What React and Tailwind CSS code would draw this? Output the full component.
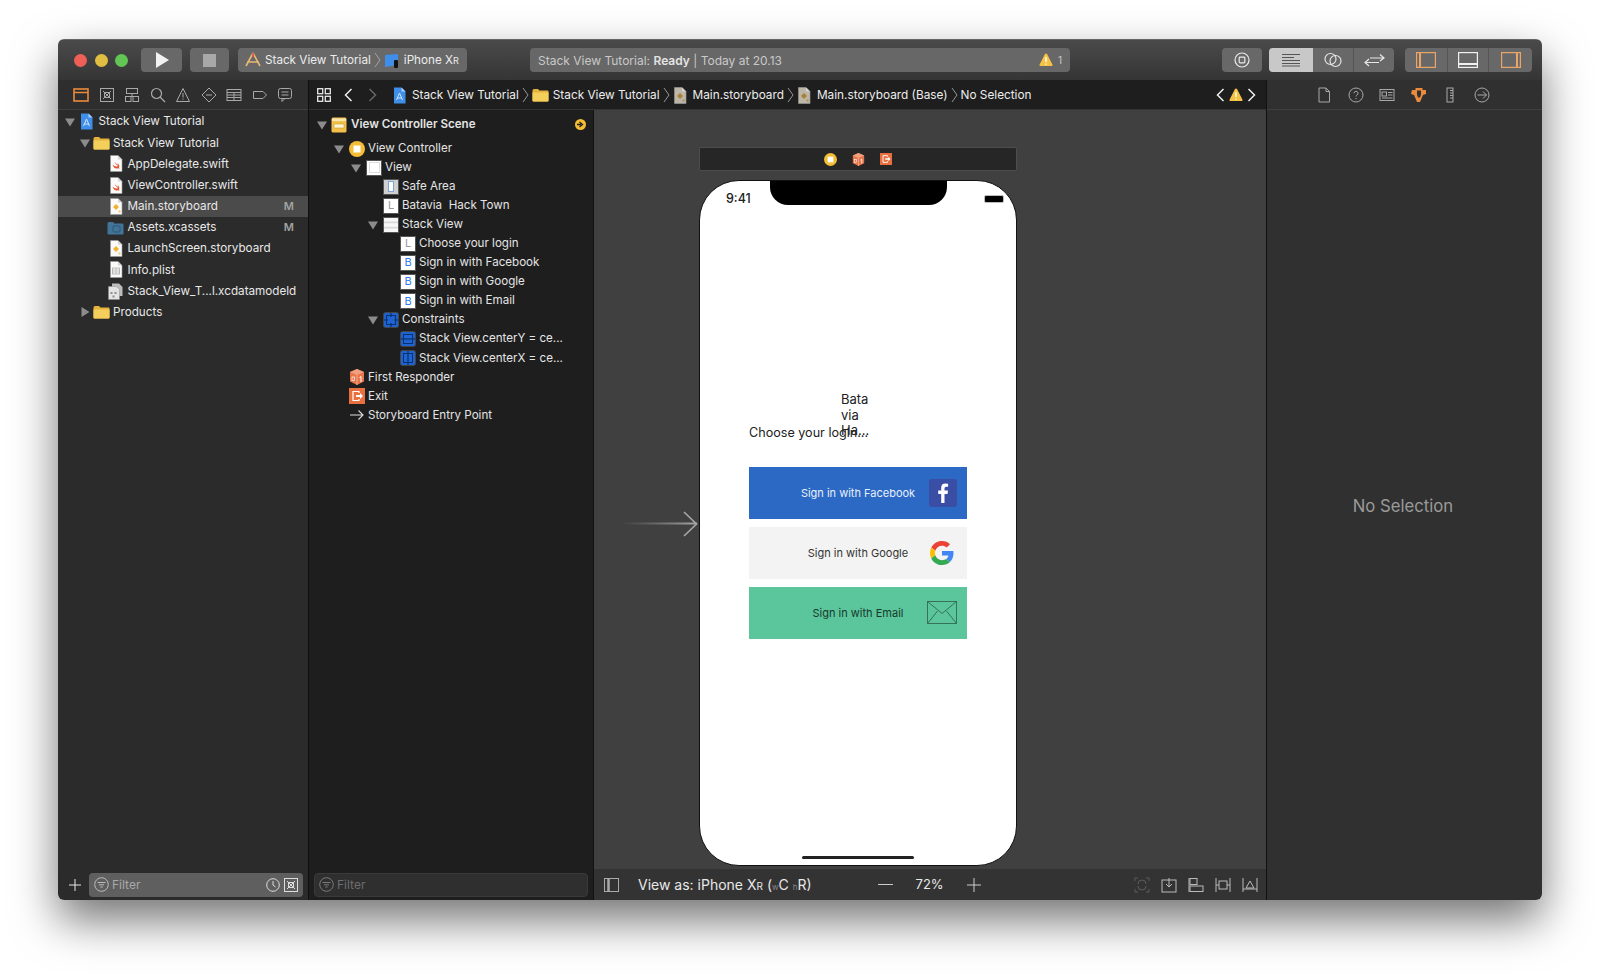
import React from 'react'

const Tri = ({ open }) => (
  <svg width="12" height="12" viewBox="0 0 12 12" className="shrink-0">
    {open ? <path d="M1 2.500h10L6 10.500z" fill="#8c8c8c" /> : <path d="M2.500 1v10l8-5z" fill="#8c8c8c" />}
  </svg>
)

const Doc = ({ children, fill = '#fafafa', w = 14, h = 17 }) => (
  <svg width={w} height={h} viewBox="0 0 14 17">
    <path d="M1.500.5h7.500l4 4v12h-11.500z" fill={fill} stroke="#9a9a9a" strokeWidth=".6" />
    <path d="M9 .5v4h4z" fill="#d5d5d5" />
    {children}
  </svg>
)

const Folder = ({ c1 = '#f5cf5c', c2 = '#e5b23c', w = 17, h = 14 }) => (
  <svg width={w} height={h} viewBox="0 0 17 14">
    <path d="M.5 2.500q0-1.500 1.500-1.500h4l1.500 1.500h8q1 0 1 1v9q0 1-1 1h-14q-1 0-1-1z" fill={c2} />
    <path d="M.5 4.500h16v8q0 1-1 1h-14q-1 0-1-1z" fill={c1} />
  </svg>
)

const ProjectIcon = () => (
  <svg width="15" height="17" viewBox="0 0 14 17">
    <path d="M1.500.5h7.500l4 4v12h-11.500z" fill="#3f8eea" />
    <path d="M9 .5v4h4z" fill="#a8d0fa" />
    <path d="M4 13l3-7 3 7M4.500 11h5" stroke="#cfe4fc" strokeWidth="1" fill="none" />
  </svg>
)

const SwiftIcon = () => (
  <Doc>
    <path d="M3.500 9.500q3 3 5.500 1.500-3-2.500-3.500-4 2.500 2.500 4 3-1-2-1-2 2.500 2 1.500 5 .5 .5 .5 1-1-1-2.500-.5-3 .5-4.500-4z" fill="#e5532f" />
  </Doc>
)

const BoardIcon = ({ c = '#eeb42f', fill = '#fafafa' }) => (
  <Doc fill={fill}>
    <path d="M7 6l3 3-3 3-3-3z" fill={c} />
    <path d="M9.500 12.500h2v2h-2z" fill={c} opacity=".7" />
  </Doc>
)

const PlistIcon = () => (
  <Doc>
    <rect x="3.500" y="7" width="7" height="6" fill="none" stroke="#aaa" strokeWidth=".8" />
    <path d="M3.500 9h7M3.500 11h7M7 7v6" stroke="#aaa" strokeWidth=".6" />
  </Doc>
)

const ModelIcon = () => (
  <svg width="17" height="17" viewBox="0 0 17 17">
    <path d="M5 .5h7l3.500 3.500v9h-10.500z" fill="#bdbdbd" />
    <path d="M1.500 3.500h8l3 3v10h-11z" fill="#e4e4e4" stroke="#8e8e8e" strokeWidth=".5" />
    <path d="M3.500 9h2v2h-2zM7.500 9h2v2h-2zM5.500 12.500h2v2h-2z" fill="#8e8e8e" />
  </svg>
)

const AssetsIcon = () => (
  <svg width="17" height="14" viewBox="0 0 17 14">
    <path d="M.5 2.500q0-1.500 1.500-1.500h4l1.500 1.500h8q1 0 1 1v9q0 1-1 1h-14q-1 0-1-1z" fill="#42749a" />
    <rect x="6" y="5" width="7" height="6" rx="1" fill="none" stroke="#2f5572" strokeWidth="1" />
  </svg>
)

const navRows = [
  { level: 0, open: true, icon: <ProjectIcon />, text: 'Stack View Tutorial' },
  { level: 1, open: true, icon: <Folder />, text: 'Stack View Tutorial' },
  { level: 2, icon: <SwiftIcon />, text: 'AppDelegate.swift' },
  { level: 2, icon: <SwiftIcon />, text: 'ViewController.swift' },
  { level: 2, icon: <BoardIcon />, text: 'Main.storyboard', mark: 'M', selected: true },
  { level: 2, icon: <AssetsIcon />, text: 'Assets.xcassets', mark: 'M' },
  { level: 2, icon: <BoardIcon />, text: 'LaunchScreen.storyboard' },
  { level: 2, icon: <PlistIcon />, text: 'Info.plist' },
  { level: 2, icon: <ModelIcon />, text: 'Stack_View_T...l.xcdatamodeld' },
  { level: 1, open: false, icon: <Folder />, text: 'Products' },
]

const Tile = ({ children, className = 'bg-white' }) => (
  <span className={`w-[16px] h-[16px] flex items-center justify-center text-[11px] leading-none border border-[#555] ${className}`}>
    {children}
  </span>
)

const SceneIcon = () => (
  <svg width="16" height="16" viewBox="0 0 16 16">
    <rect x=".5" y=".5" width="15" height="15" rx="1.500" fill="#f2c14a" />
    <path d="M1 1.500h14v2.500h-14z" fill="#f7e6b0" />
    <rect x="3" y="7" width="10" height="4" fill="#fdf3d0" stroke="#b88f2a" strokeWidth=".5" />
  </svg>
)

const VcIcon = ({ size = 16 }) => (
  <svg width={size} height={size} viewBox="0 0 16 16">
    <circle cx="8" cy="8" r="8" fill="#f3bd35" />
    <rect x="4.500" y="4.500" width="7" height="7" fill="#fff" />
  </svg>
)

const CubeIcon = ({ size = 16 }) => (
  <svg width={size} height={size} viewBox="0 0 16 16">
    <path d="M8 0l7 3v9.500l-7 3.500-7-3.500v-9.500z" fill="#e8744a" />
    <path d="M8 0l7 3-7 3-7-3z" fill="#f0a07f" />
    <path d="M8 6v10" stroke="#f6c7b0" strokeWidth=".7" />
    <path d="M10.500 8.500l1.500-1v5.500" stroke="#fff" strokeWidth="1" fill="none" />
    <rect x="3" y="8" width="2.500" height="3.500" fill="none" stroke="#fff" strokeWidth=".7" />
  </svg>
)

const ExitIcon = ({ size = 16 }) => (
  <svg width={size} height={size} viewBox="0 0 16 16">
    <rect width="16" height="16" fill="#e96f3f" />
    <path d="M10 5v-1.500h-6v9h6v-1.500" stroke="#fff" strokeWidth="1.200" fill="none" />
    <path d="M7 7h4v-2l3 3-3 3v-2h-4z" fill="#fff" />
  </svg>
)

const Constraint = ({ v }) => (
  <svg width="16" height="16" viewBox="0 0 16 16">
    <rect x=".5" y=".5" width="15" height="15" rx="2" fill="#1d64d0" stroke="#444" />
    <rect x="3.500" y="3.500" width="9" height="9" fill="none" stroke="#0b2f6e" />
    {v === 'y' && <path d="M1 8h14" stroke="#0b2f6e" strokeWidth="1.200" />}
    {v === 'x' && <path d="M8 1v14" stroke="#0b2f6e" strokeWidth="1.200" />}
    {v === 'c' && <path d="M8 1v4M8 11v4M1 8h4M11 8h4" stroke="#0b2f6e" strokeWidth="1.200" />}
  </svg>
)

const StackTile = () => (
  <Tile className="bg-[#d9d9d9]">
    <svg width="14" height="14" viewBox="0 0 14 14">
      <path d="M0 0h14v3.500h-14zM0 5.200h14v3.500h-14zM0 10.400h14v3.600h-14z" fill="#f7f7f7" />
    </svg>
  </Tile>
)

const SafeTile = () => (
  <Tile className="bg-[#d0d0d0]">
    <span className="w-[6px] h-[11px] bg-white border border-[#7da3dd]" />
  </Tile>
)

const LabelTile = () => <Tile><span className="text-[#9a9a9a]">L</span></Tile>
const BtnTile = () => <Tile><span className="text-[#2f7bf0]">B</span></Tile>

const outlineRows = [
  { level: 0, open: true, icon: <VcIcon />, text: 'View Controller' },
  { level: 1, open: true, icon: <Tile><span className="w-[11px] h-[11px] bg-white border border-[#ddd]" /></Tile>, text: 'View' },
  { level: 2, icon: <SafeTile />, text: 'Safe Area' },
  { level: 2, icon: <LabelTile />, text: 'Batavia\u00a0 Hack Town' },
  { level: 2, open: true, icon: <StackTile />, text: 'Stack View' },
  { level: 3, icon: <LabelTile />, text: 'Choose your login' },
  { level: 3, icon: <BtnTile />, text: 'Sign in with Facebook' },
  { level: 3, icon: <BtnTile />, text: 'Sign in with Google' },
  { level: 3, icon: <BtnTile />, text: 'Sign in with Email' },
  { level: 2, open: true, icon: <Constraint v="c" />, text: 'Constraints' },
  { level: 3, icon: <Constraint v="y" />, text: 'Stack View.centerY = ce...' },
  { level: 3, icon: <Constraint v="x" />, text: 'Stack View.centerX = ce...' },
  { level: 0, icon: <CubeIcon />, text: 'First Responder' },
  { level: 0, icon: <ExitIcon />, text: 'Exit' },
  {
    level: 0,
    icon: (
      <svg width="16" height="16" viewBox="0 0 16 16">
        <path d="M1 8h13M9.500 3.500l4.500 4.500-4.500 4.500" stroke="#ddd" strokeWidth="1.100" fill="none" />
      </svg>
    ),
    text: 'Storyboard Entry Point',
  },
]

const Warn = ({ size = 14 }) => (
  <svg width={size} height={size} viewBox="0 0 14 14">
    <path d="M7 .5q.8 0 1.200.8l5.300 10.500q.4 1.200-.8 1.200h-11.400q-1.200 0-.8-1.200l5.300-10.500q.4-.8 1.200-.8z" fill="#f6c244" />
    <path d="M7 4v5M7 10.500v1.200" stroke="#fff" strokeWidth="1.400" />
  </svg>
)

const Crumb = () => (
  <svg width="7" height="16" viewBox="0 0 7 16" className="shrink-0">
    <path d="M1 1l5 7-5 7" stroke="#b5b5b5" strokeWidth=".8" fill="none" />
  </svg>
)

const Stroke = ({ w = 16, h = 16, vb = '0 0 16 16', c = '#a8a8a8', sw = 1, children }) => (
  <svg width={w} height={h} viewBox={vb} fill="none" stroke={c} strokeWidth={sw}>
    {children}
  </svg>
)

const Toolbar = () => (
  <div className="h-[41px] flex items-center bg-linear-to-b from-[#4a4a4a] to-[#353535] border-t border-[#666]">
    <div className="flex items-center gap-[7.500px] pl-[16px]">
      <span className="w-[13px] h-[13px] rounded-full bg-[#ee5f57]" />
      <span className="w-[13px] h-[13px] rounded-full bg-[#e0be41]" />
      <span className="w-[13px] h-[13px] rounded-full bg-[#62c554]" />
    </div>
    <div className="ml-[13px] w-[41px] h-[24px] rounded-[4px] bg-[#686868] flex items-center justify-center">
      <svg width="14" height="16" viewBox="0 0 14 16"><path d="M1 0l13 8-13 8z" fill="#f2f2f2" /></svg>
    </div>
    <div className="ml-[8px] w-[39px] h-[24px] rounded-[4px] bg-[#686868] flex items-center justify-center">
      <span className="w-[13px] h-[13px] bg-[#a8a8a8]" />
    </div>
    <div className="ml-[9px] w-[229px] h-[24px] rounded-[4px] bg-[#686868] flex items-center pl-[6px] text-[11.700px] text-[#ececec] whitespace-nowrap">
      <svg width="18" height="16" viewBox="0 0 18 16">
        <path d="M9 1l-7 13M9 1l7 13M3 10h12" stroke="#e8b775" strokeWidth="1.600" fill="none" />
        <path d="M9 1v4" stroke="#d5533a" strokeWidth="1.600" />
      </svg>
      <span className="ml-[3px] pt-[1px]">Stack View Tutorial</span>
      <span className="mx-[3px]"><Crumb /></span>
      <svg width="16" height="16" viewBox="0 0 16 16">
        <path d="M1 3l13-1v11l-13 2z" fill="#3f8eea" />
        <rect x="10" y="8" width="4" height="8" rx="1" fill="#111" />
      </svg>
      <span className="ml-[4px] pt-[1px]">iPhone X<span className="text-[9px]">R</span></span>
    </div>
    <div className="ml-[63px] w-[540px] h-[24px] rounded-[4px] bg-[#676767] flex items-center pl-[8px] pr-[8px] text-[12px] text-[#c9c9c9]">
      <span className="pt-[1px]">Stack View Tutorial: <b className="font-semibold text-[#e4e4e4]">Ready</b> | Today at 20.13</span>
      <span className="ml-auto flex items-center gap-[5px] text-[10px]"><Warn />1</span>
    </div>
    <div className="ml-[152px] w-[40px] h-[24px] rounded-[4px] bg-[#686868] flex items-center justify-center">
      <Stroke c="#eaeaea" sw={1.2}>
        <circle cx="8" cy="8" r="7" />
        <rect x="5.200" y="5.200" width="5.600" height="5.600" rx=".8" />
      </Stroke>
    </div>
    <div className="ml-[7px] w-[125px] h-[24px] rounded-[4px] bg-[#686868] flex items-center">
      <div className="w-[44px] h-full rounded-l-[4px] bg-[#c8c8c8] flex items-center justify-center">
        <Stroke w={20} h={14} vb="0 0 20 14" c="#555">
          <path d="M1 1.500h18M1 4.500h12M1 7.500h18M1 10.500h18M1 13h18" />
        </Stroke>
      </div>
      <div className="w-[41px] h-full border-r border-[#555] flex items-center justify-center">
        <Stroke w={18} h={16} vb="0 0 18 16" c="#e6e6e6" sw={1.200}>
          <circle cx="6.500" cy="7" r="5.500" />
          <circle cx="11.500" cy="9" r="5.500" />
        </Stroke>
      </div>
      <div className="flex-1 flex items-center justify-center">
        <Stroke w={21} h={14} vb="0 0 21 14" c="#e6e6e6" sw={1.200}>
          <path d="M6 5h14M16 1.500l4 3.500-4 3M15 9.500h-14M5 6l-4 3.500 4 3.500" />
        </Stroke>
      </div>
    </div>
    <div className="ml-[11px] w-[127px] h-[24px] rounded-[4px] bg-[#686868] flex items-center">
      <div className="w-[43px] h-full border-r border-[#555] flex items-center justify-center">
        <Stroke w={20} h={16} vb="0 0 20 16" c="#eba667" sw={1.200}>
          <rect x=".6" y=".6" width="18.800" height="14.800" />
          <path d="M4 1v14" strokeWidth="2" />
        </Stroke>
      </div>
      <div className="w-[41px] h-full border-r border-[#555] flex items-center justify-center">
        <Stroke w={20} h={16} vb="0 0 20 16" c="#f0f0f0" sw={1.200}>
          <rect x=".6" y=".6" width="18.800" height="14.800" />
          <path d="M1 12h18" strokeWidth="2" />
        </Stroke>
      </div>
      <div className="flex-1 flex items-center justify-center">
        <Stroke w={20} h={16} vb="0 0 20 16" c="#eba667" sw={1.200}>
          <rect x=".6" y=".6" width="18.800" height="14.800" />
          <path d="M16 1v14" strokeWidth="2" />
        </Stroke>
      </div>
    </div>
  </div>
)

const navTabs = [
  <Stroke key="0" c="#e98a3c" sw={1.600}><rect x="1" y="2" width="14" height="12" /><path d="M1 5.500h14" /></Stroke>,
  <Stroke key="1"><rect x="1.500" y="1.500" width="13" height="13" /><path d="M4 4l8 8M12 4l-8 8" /><rect x="5.500" y="5.500" width="5" height="5" /></Stroke>,
  <Stroke key="2"><rect x="2.500" y="1.500" width="11" height="5" /><path d="M8 6.500v3M1.500 9.500h13" /><rect x="1.500" y="9.500" width="5.500" height="5" /><rect x="9" y="9.500" width="5.500" height="5" /></Stroke>,
  <Stroke key="3" sw={1.200}><circle cx="6.500" cy="6.500" r="5" /><path d="M10 10l5 5" /></Stroke>,
  <Stroke key="4"><path d="M8 1.500l6.500 13h-13z" /><path d="M8 6v4.500M8 11.500v1.200" /></Stroke>,
  <Stroke key="5"><path d="M8 1l7 7-7 7-7-7z" /><path d="M5 8h6" /></Stroke>,
  <Stroke key="6"><rect x="1" y="2.500" width="14" height="11" /><path d="M1 5.500h14M1 8h14M1 10.500h14M8 5.500v8" /></Stroke>,
  <Stroke key="7"><path d="M1.500 4.500h9.500l3.500 3.500-3.500 3.500h-9.500z" /></Stroke>,
  <Stroke key="8"><rect x="1.500" y="1.500" width="13" height="10" rx="2" /><path d="M4.500 5h7M4.500 8h7M5 11.500v3l3-3" /></Stroke>,
]

const FilterGlyph = ({ c = '#bbb' }) => (
  <Stroke w={15} h={15} vb="0 0 15 15" c={c}>
    <circle cx="7.500" cy="7.500" r="6.800" />
    <path d="M3.500 5.500h8M5 7.800h5M6.300 10h2.400" />
  </Stroke>
)

const Navigator = () => (
  <div className="w-[251px] shrink-0 flex flex-col bg-[#2b2b2b] border-r border-[#0f0f0f]">
    <div className="h-[30px] shrink-0 flex items-center pl-[15px] gap-[9.500px] pt-[1px] border-b border-[#3f3f3f] bg-[#2e2e2e]">
      {navTabs}
    </div>
    <div className="flex-1 pt-[1px] text-[11.700px] text-[#e8e8e8]">
      {navRows.map((row, i) => (
        <div key={i} className={`h-[21.200px] flex items-center pr-[14px] ${row.selected ? 'bg-[#4b4b4b]' : ''}`}>
          <div className="flex items-center" style={{ paddingLeft: 6 + row.level * 14.5 }}>
            <span className="w-[12px] shrink-0">{row.open !== undefined && <Tri open={row.open} />}</span>
            <span className="w-[17px] ml-[2px] mr-[3.500px] flex items-center justify-center shrink-0">{row.icon}</span>
          </div>
          <span className="whitespace-nowrap pt-[1px]">{row.text}</span>
          {row.mark && <span className="ml-auto font-semibold text-[#a3a3a3] text-[11px]">{row.mark}</span>}
        </div>
      ))}
    </div>
    <div className="h-[31px] shrink-0 flex items-center pl-[11px]">
      <Stroke w={12} h={12} vb="0 0 12 12" c="#e8e8e8"><path d="M6 0v12M0 6h12" /></Stroke>
      <div className="ml-[8px] w-[214px] h-[24px] rounded-[4px] bg-[#5f5f5f] flex items-center pl-[5px] pr-[5px] text-[12px] text-[#a9a9a9]">
        <FilterGlyph />
        <span className="ml-[3px]">Filter</span>
        <span className="ml-auto flex items-center gap-[4px]">
          <Stroke w={14} h={14} vb="0 0 14 14" c="#ddd">
            <circle cx="7" cy="7" r="6.300" />
            <path d="M7 3v4l2.500 2" />
          </Stroke>
          <Stroke w={14} h={14} vb="0 0 14 14" c="#ddd">
            <rect x=".5" y=".5" width="13" height="13" />
            <path d="M3 3l8 8M11 3l-8 8" />
            <rect x="4.500" y="4.500" width="5" height="5" />
          </Stroke>
        </span>
      </div>
    </div>
  </div>
)

const JumpBar = () => (
  <div className="h-[30px] shrink-0 flex items-center pt-[1px] bg-[#1e1e1e] border-b border-[#333] text-[11.800px] text-[#ededed] whitespace-nowrap">
    <div className="ml-[8px]">
      <Stroke w={14} h={14} vb="0 0 14 14" c="#e8e8e8" sw={1.300}>
        <rect x=".7" y=".7" width="5" height="5" />
        <rect x="8.300" y=".7" width="5" height="5" />
        <rect x=".7" y="8.300" width="5" height="5" />
        <rect x="8.300" y="8.300" width="5" height="5" />
      </Stroke>
    </div>
    <div className="ml-[13px]">
      <Stroke w={9} h={14} vb="0 0 9 14" c="#eee" sw={1.500}><path d="M7.500 1l-6 6 6 6" /></Stroke>
    </div>
    <div className="ml-[15px]">
      <Stroke w={9} h={14} vb="0 0 9 14" c="#666" sw={1.500}><path d="M1.500 1l6 6-6 6" /></Stroke>
    </div>
    <span className="ml-[15px]"><ProjectIcon /></span>
    <span className="ml-[5px] pt-[2px]">Stack View Tutorial</span>
    <span className="mx-[3px]"><Crumb /></span>
    <Folder />
    <span className="ml-[4px] pt-[2px]">Stack View Tutorial</span>
    <span className="mx-[3px]"><Crumb /></span>
    <BoardIcon fill="#bdb6a6" c="#a5823a" />
    <span className="ml-[6px] pt-[2px]">Main.storyboard</span>
    <span className="mx-[3px]"><Crumb /></span>
    <BoardIcon fill="#bdb6a6" c="#a5823a" />
    <span className="ml-[6px] pt-[2px]">Main.storyboard (Base)</span>
    <span className="mx-[3px]"><Crumb /></span>
    <span className="pt-[2px]">No Selection</span>
    <div className="ml-auto mr-[10px] flex items-center gap-[4px]">
      <Stroke w={9} h={14} vb="0 0 9 14" c="#eee" sw={1.500}><path d="M7.500 1l-6 6 6 6" /></Stroke>
      <Warn />
      <Stroke w={9} h={14} vb="0 0 9 14" c="#eee" sw={1.500}><path d="M1.500 1l6 6-6 6" /></Stroke>
    </div>
  </div>
)

const Outline = () => (
  <div className="w-[285px] shrink-0 flex flex-col bg-[#1e1e1e] border-r border-[#111] text-[11.600px] text-[#e4e4e4]">
    <div className="flex-1">
      <div className="h-[29px] flex items-center pl-[7px] pr-[7px]">
        <Tri open />
        <span className="ml-[3px]"><SceneIcon /></span>
        <span className="ml-[4px] pt-[1px] font-semibold">View Controller Scene</span>
        <span className="ml-auto w-[11px] h-[11px] rounded-full bg-[#f3bd35] flex items-center justify-center">
          <svg width="9" height="9" viewBox="0 0 9 9"><path d="M1 4.500h4M3.500 2l3 2.500-3 2.500" stroke="#222" strokeWidth="1.300" fill="none" /></svg>
        </span>
      </div>
      {outlineRows.map((row, i) => (
        <div key={i} className="h-[19.070px] flex items-center whitespace-nowrap" style={{ paddingLeft: 24 + row.level * 17 }}>
          <span className="w-[12px] shrink-0">{row.open !== undefined && <Tri open={row.open} />}</span>
          <span className="w-[16px] ml-[4px] mr-[3px] shrink-0 flex items-center justify-center">{row.icon}</span>
          <span>{row.text}</span>
        </div>
      ))}
    </div>
    <div className="h-[31px] shrink-0 flex items-center pl-[5px]">
      <div className="w-[274px] h-[24px] rounded-[4px] bg-[#2f2f2f] border border-[#3a3a3a] flex items-center pl-[4px] text-[12px] text-[#6e6e6e]">
        <FilterGlyph c="#7a7a7a" />
        <span className="ml-[3px]">Filter</span>
      </div>
    </div>
  </div>
)

const SignInButton = ({ bg, color, label, icon }) => (
  <div className={`relative h-[52px] flex items-center justify-center pt-[1px] text-[11px] ${bg} ${color}`}>
    {label}
    <span className="absolute right-[10px] top-0 bottom-0 flex items-center">{icon}</span>
  </div>
)

const Phone = () => (
  <div className="w-[318px] h-[686px] rounded-[40px] bg-white border border-[#111] overflow-hidden text-black flex flex-col relative">
    <div className="h-[24px] shrink-0 flex items-start pl-[26px] pr-[12px]">
      <span className="w-[44px] pt-[10px] text-[12.500px] leading-[16px] font-medium text-[#222]">9:41</span>
      <span className="w-[177px] h-[24px] bg-black rounded-b-[18px]" />
      <span className="ml-auto mt-[14px] w-[20px] h-[8px] rounded-[2px] bg-black border border-[#bbb]" />
    </div>
    <div className="mt-[218px] mx-[49px] relative">
      <div className="h-[20px] flex items-center text-[12.600px] text-[#222] whitespace-nowrap">Choose your login...</div>
      <div className="absolute left-[92px] top-[-31px] text-[13px] leading-[15.500px] text-[#222]">
        <div>Bata</div>
        <div>via</div>
        <div>Ha...</div>
      </div>
      <div className="mt-[23.500px] flex flex-col gap-[8px]">
        <SignInButton
          bg="bg-[#2c69c4]"
          color="text-[#e8f0fb]"
          label="Sign in with Facebook"
          icon={
            <svg width="28" height="28" viewBox="0 0 28 28">
              <rect width="28" height="28" rx="3" fill="#3b4ea6" />
              <path d="M15.500 24v-9h3l.5-3.500h-3.500v-2q0-1.700 1.700-1.700h1.900v-3.100q-1-.2-2.700-.2-4.200 0-4.200 4.300v2.700h-3v3.500h3v9z" fill="#fff" />
            </svg>
          }
        />
        <SignInButton
          bg="bg-[#f3f3f3]"
          color="text-[#333]"
          label="Sign in with Google"
          icon={
            <span className="mr-[3px]">
              <svg width="24" height="24" viewBox="0 0 48 48">
                <path fill="#EA4335" d="M24 9.500c3.540 0 6.710 1.220 9.210 3.600l6.850-6.850C35.900 2.380 30.470 0 24 0 14.620 0 6.510 5.380 2.560 13.220l7.980 6.190C12.430 13.720 17.740 9.500 24 9.500z" />
                <path fill="#4285F4" d="M46.980 24.550c0-1.570-.15-3.090-.38-4.550H24v9.020h12.940c-.58 2.960-2.260 5.480-4.780 7.180l7.730 6c4.510-4.180 7.090-10.360 7.090-17.650z" />
                <path fill="#FBBC05" d="M10.530 28.590c-.48-1.450-.76-2.990-.76-4.590s.27-3.140.76-4.590l-7.980-6.190C.92 16.460 0 20.120 0 24c0 3.880.92 7.540 2.560 10.780l7.970-6.190z" />
                <path fill="#34A853" d="M24 48c6.480 0 11.930-2.130 15.890-5.810l-7.730-6c-2.150 1.450-4.920 2.300-8.160 2.300-6.260 0-11.570-4.220-13.470-9.910l-7.980 6.190C6.510 42.620 14.620 48 24 48z" />
              </svg>
            </span>
          }
        />
        <SignInButton
          bg="bg-[#5bc59b]"
          color="text-[#173a2c]"
          label="Sign in with Email"
          icon={
            <svg width="30" height="23" viewBox="0 0 30 23" fill="none" stroke="#36715a" strokeWidth="1">
              <rect x=".5" y=".5" width="29" height="22" />
              <path d="M.5 .5l14.500 12 14.500-12M.5 22.500l10-12.500M29.500 22.500l-10-12.500" />
            </svg>
          }
        />
      </div>
    </div>
    <div className="absolute left-[102px] bottom-[6px] w-[112px] h-[3px] rounded-full bg-[#222]" />
  </div>
)

const Canvas = () => (
  <div className="flex-1 min-w-0 flex flex-col bg-[#404040]">
    <div className="flex-1 pt-[37px] pl-[105px] relative">
      <div className="w-[318px] h-[24px] rounded-[2px] bg-[#262626] border border-[#4d4d4d] flex items-center justify-center gap-[15px]">
        <VcIcon size={13} />
        <CubeIcon size={13} />
        <ExitIcon size={12} />
      </div>
      <div className="mt-[9px] relative">
        <Phone />
        <svg width="78" height="26" viewBox="0 0 78 26" className="absolute left-[-78px] top-[331px]" fill="none">
          <defs>
            <linearGradient id="entry" gradientUnits="userSpaceOnUse" x1="0" x2="78" y1="0" y2="0">
              <stop offset="0" stopColor="#8f8f8f" stopOpacity="0" />
              <stop offset="1" stopColor="#a8a8a8" />
            </linearGradient>
          </defs>
          <path d="M0 12.600h76" stroke="url(#entry)" strokeWidth="2" />
          <path d="M63 1l12.500 12L63 25" stroke="#a8a8a8" strokeWidth="1.600" />
        </svg>
      </div>
    </div>
    <div className="h-[31px] shrink-0 flex items-center bg-[#333] pl-[10px] pr-[8px] text-[#e8e8e8] whitespace-nowrap">
      <Stroke w={15} h={14} vb="0 0 15 14" c="#aaa">
        <rect x=".5" y=".5" width="14" height="13" />
        <path d="M4.500 1v12" strokeWidth="2.500" />
      </Stroke>
      <span className="ml-[19px] text-[14px]">
        View as: iPhone X<span className="text-[10px]">R</span> (<span className="text-[8px] text-[#888]">w</span>C <span className="text-[8px] text-[#888]">h</span>R)
      </span>
      <span className="ml-[66px] w-[15px] h-[1px] bg-[#ccc]" />
      <span className="ml-[23px] text-[13px]">72%</span>
      <span className="ml-[23px]">
        <Stroke w={14} h={14} vb="0 0 14 14" c="#ccc"><path d="M7 0v14M0 7h14" /></Stroke>
      </span>
      <div className="ml-auto flex items-center gap-[11px]">
        <Stroke c="#5c5c5c">
          <path d="M1 4v-3h3M12 1h3v3M15 12v3h-3M4 15h-3v-3" />
          <path d="M4 7a4 4 0 0 1 8 0M12 9a4 4 0 0 1-8 0" />
        </Stroke>
        <Stroke c="#bbb">
          <rect x="1" y="3" width="14" height="12" />
          <path d="M8 1v9M5 7l3 3 3-3" />
        </Stroke>
        <Stroke c="#bbb">
          <rect x="2" y="1.500" width="7" height="6" />
          <rect x="2" y="9" width="13" height="5.500" />
          <path d="M1 1v14" />
        </Stroke>
        <Stroke c="#bbb">
          <rect x="4" y="4" width="8" height="8" />
          <path d="M1 1v14M15 1v14M1 8h3M12 8h3" />
        </Stroke>
        <Stroke c="#bbb">
          <path d="M1 1v14M15 1v14M8 4l4 7h-8zM1 12h14" />
        </Stroke>
      </div>
    </div>
  </div>
)

const Inspector = () => (
  <div className="flex-1 min-w-0 flex flex-col bg-[#303030] border-l border-[#111]">
    <div className="h-[30px] shrink-0 flex items-center pl-[49px] gap-[15.500px] pt-[1px] border-b border-[#3f3f3f]">
      <Stroke><path d="M3 1h7l3.500 3.500v10.500h-10.500z" /><path d="M10 1v3.500h3.500" /></Stroke>
      <Stroke><circle cx="8" cy="8" r="7" /><path d="M6 6.200a2 2 0 1 1 2.800 1.900q-.8.400-.8 1.400M8 11v1.200" /></Stroke>
      <Stroke><rect x="1" y="2.500" width="14" height="11" /><rect x="3" y="5" width="4.500" height="4" /><path d="M9 5.500h4.500M9 8h4.500M3 11h10.500" /></Stroke>
      <svg width="16" height="16" viewBox="0 0 16 16">
        <path d="M1 3h3.500v-2h7v2h3.500v4l-3 1-3 7h-3l-3-7-3-1z" fill="#e98a3c" />
        <path d="M6 3.500h4v4l-1 3h-2l-1-3z" fill="#303030" />
      </svg>
      <Stroke><rect x="5" y="1" width="6" height="14" /><path d="M8 3.500h3M8 6h3M8 8.500h3M8 11h3" /></Stroke>
      <Stroke><circle cx="8" cy="8" r="7" /><path d="M3.500 8h9M9 4.500l3.500 3.500-3.500 3.500" /></Stroke>
    </div>
    <div className="flex-1 flex items-center justify-center pr-[3px] pt-[3px] text-[16.700px] text-[#9a9a9a]">No Selection</div>
  </div>
)

export default function App() {
  return (
    <div className="h-screen overflow-hidden bg-white pt-[39px] pl-[58px] font-['Inter',sans-serif]">
      <div className="w-[1484px] h-[861px] rounded-[6px] overflow-hidden flex flex-col shadow-[0_20px_45px_rgba(0,0,0,0.55)]">
        <Toolbar />
        <div className="flex-1 min-h-0 flex">
          <Navigator />
          <div className="w-[957px] shrink-0 flex flex-col">
            <JumpBar />
            <div className="flex-1 min-h-0 flex">
              <Outline />
              <Canvas />
            </div>
          </div>
          <Inspector />
        </div>
      </div>
    </div>
  )
}
